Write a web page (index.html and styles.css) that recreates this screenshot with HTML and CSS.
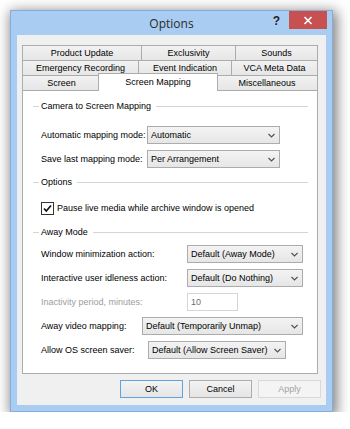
FILE: index.html
```html
<!DOCTYPE html>
<html>
<head>
<meta charset="utf-8">
<title>Options</title>
<link rel="stylesheet" href="styles.css">
</head>
<body>
<div class="window">
  <div class="titlebar">
    <div class="spacer"></div>
    <div class="title">Options</div>
    <div class="ctrls">
      <span class="help">?</span>
      <span class="close"><svg width="10" height="9" viewBox="0 0 10 9"><path d="M1.5 1L8.5 8M8.5 1L1.5 8" stroke="#fff" stroke-width="1.7" fill="none"/></svg></span>
    </div>
  </div>
  <div class="client">
    <div class="tabs">
      <div class="tabrow">
        <div class="tab t120">Product Update</div>
        <div class="tab t95">Exclusivity</div>
        <div class="tab t83">Sounds</div>
      </div>
      <div class="tabrow">
        <div class="tab t117">Emergency Recording</div>
        <div class="tab t94">Event Indication</div>
        <div class="tab t87">VCA Meta Data</div>
      </div>
      <div class="tabrow">
        <div class="tab t79">Screen</div>
        <div class="tab sel">Screen Mapping</div>
        <div class="tab t102 after-sel">Miscellaneous</div>
      </div>
    </div>
    <div class="panel">
      <div class="group first">Camera to Screen Mapping</div>
      <div class="row cam first-row">
        <span class="label">Automatic mapping mode:</span>
        <div class="combo w133"><span>Automatic</span><svg class="chev" width="7" height="5" viewBox="0 0 7 5"><path d="M0.5 1L3.5 4L6.5 1" stroke="#555" stroke-width="1.2" fill="none"/></svg></div>
      </div>
      <div class="row cam">
        <span class="label">Save last mapping mode:</span>
        <div class="combo w133"><span>Per Arrangement</span><svg class="chev" width="7" height="5" viewBox="0 0 7 5"><path d="M0.5 1L3.5 4L6.5 1" stroke="#555" stroke-width="1.2" fill="none"/></svg></div>
      </div>
      <div class="group">Options</div>
      <div class="check-row">
        <svg class="checkbox" width="13" height="13" viewBox="0 0 13 13"><rect x="0.5" y="0.5" width="12" height="12" fill="#fff" stroke="#333"/><path d="M3 6.5L5.3 9L10 3.5" stroke="#111" stroke-width="1.7" fill="none"/></svg>
        <span>Pause live media while archive window is opened</span>
      </div>
      <div class="group away">Away Mode</div>
      <div class="row wide">
        <span class="label">Window minimization action:</span>
        <div class="combo w116"><span>Default (Away Mode)</span><svg class="chev" width="7" height="5" viewBox="0 0 7 5"><path d="M0.5 1L3.5 4L6.5 1" stroke="#555" stroke-width="1.2" fill="none"/></svg></div>
      </div>
      <div class="row wide">
        <span class="label">Interactive user idleness action:</span>
        <div class="combo w116"><span>Default (Do Nothing)</span><svg class="chev" width="7" height="5" viewBox="0 0 7 5"><path d="M0.5 1L3.5 4L6.5 1" stroke="#555" stroke-width="1.2" fill="none"/></svg></div>
      </div>
      <div class="row wide">
        <span class="label disabled">Inactivity period, minutes:</span>
        <div class="textbox">10</div>
      </div>
      <div class="row video">
        <span class="label">Away video mapping:</span>
        <div class="combo w161"><span>Default (Temporarily Unmap)</span><svg class="chev" width="7" height="5" viewBox="0 0 7 5"><path d="M0.5 1L3.5 4L6.5 1" stroke="#555" stroke-width="1.2" fill="none"/></svg></div>
      </div>
      <div class="row os">
        <span class="label">Allow OS screen saver:</span>
        <div class="combo w138"><span>Default (Allow Screen Saver)</span><svg class="chev" width="7" height="5" viewBox="0 0 7 5"><path d="M0.5 1L3.5 4L6.5 1" stroke="#555" stroke-width="1.2" fill="none"/></svg></div>
      </div>
    </div>
    <div class="buttons">
      <div class="btn default">OK</div>
      <div class="btn">Cancel</div>
      <div class="btn disabled">Apply</div>
    </div>
  </div>
</div>
</body>
</html>
```

FILE: styles.css
```css
* { box-sizing: border-box; }
html, body { margin: 0; background: #ffffff; }
body {
  padding: 10px 0 0 10px;
  font-family: "Liberation Sans", Arial, sans-serif;
  font-size: 9px;
  color: #000;
}

.window {
  width: 323px;
  height: 402px;
  background: #a9cdf2;
  border: 1px solid #88acd6;
  box-shadow: 2px 3px 12px 2px rgba(0, 0, 0, 0.5);
  display: flex;
  flex-direction: column;
  padding: 0 6px 6px;
}

.titlebar {
  height: 24px;
  display: grid;
  grid-template-columns: 1fr auto 1fr;
  align-items: start;
}
.title {
  font-family: "Open Sans", "Noto Sans", sans-serif;
  font-size: 12px;
  line-height: 24px;
  color: #2a2a2a;
  padding-top: 1px;
}
.ctrls {
  justify-self: end;
  display: flex;
  align-items: flex-start;
  margin-right: -1px;
}
.help {
  font-family: "Liberation Sans", Arial, sans-serif;
  font-weight: bold;
  font-size: 12px;
  line-height: 18px;
  color: #222;
  margin-right: 9px;
  margin-top: 1px;
}
.close {
  width: 38px;
  height: 18px;
  background: #c75050;
  display: flex;
  align-items: center;
  justify-content: center;
}

.client {
  height: 370px;
  background: #f0f0f0;
  padding: 10px 5px 0 5px;
  display: flex;
  flex-direction: column;
}

.tabs { width: 296px; }
.tabrow {
  display: flex;
  align-items: flex-start;
  height: 16px;
  margin-top: -1px;
}
.tabrow:first-child { margin-top: 0; }
.tab {
  height: 16px;
  border: 1px solid #acacac;
  background: linear-gradient(#f2f2f2, #e6e6e6);
  margin-left: -1px;
  display: flex;
  align-items: center;
  justify-content: center;
  white-space: nowrap;
  color: #000;
}
.tab:first-child { margin-left: 0; }
.t120 { width: 120px; }
.t95 { width: 95px; }
.t83 { width: 83px; }
.t117 { width: 117px; }
.t94 { width: 94px; }
.t87 { width: 87px; }
.t79 { width: 79px; }
.t102 { width: 102px; }
.tab.sel {
  width: 120px;
  height: 18px;
  margin-top: -2px;
  margin-left: -3px;
  background: #fff;
  border-bottom: none;
  position: relative;
  z-index: 2;
  padding-bottom: 2px;
}
.tab.after-sel { margin-left: -2px; }

.panel {
  width: 296px;
  height: 284px;
  margin-top: -1px;
  background: #fff;
  border: 1px solid #acacac;
  position: relative;
  z-index: 1;
  padding: 0 9px 0 18px;
  display: flex;
  flex-direction: column;
}

.group {
  display: flex;
  align-items: center;
  height: 14px;
  margin-left: -8px;
  margin-top: 7px;
  white-space: nowrap;
}
.group::before {
  content: "";
  width: 6px;
  height: 1px;
  background: #d5d5d5;
  margin-right: 2px;
}
.group::after {
  content: "";
  flex: 1;
  height: 1px;
  background: #d5d5d5;
  margin-left: 5px;
}
.group.first { margin-top: 8px; }
.group.away { margin-top: 10px; }

.row {
  display: flex;
  align-items: center;
  height: 18px;
  margin-top: 6px;
}
.row.first-row { margin-top: 13px; }
.label { white-space: nowrap; flex: none; }
.row.cam .label { width: 106px; }
.row.wide .label { width: 146px; }
.row.video .label { width: 101px; }
.row.os .label { width: 107px; }
.label.disabled { color: #9d9d9d; }

.combo {
  height: 18px;
  border: 1px solid #acacac;
  background: linear-gradient(#f3f3f3, #e6e6e6);
  display: flex;
  align-items: center;
  justify-content: space-between;
  padding: 0 4px 0 3px;
  white-space: nowrap;
}
.chev { flex: none; }
.w133 { width: 133px; }
.w116 { width: 116px; }
.w161 { width: 161px; }
.w138 { width: 138px; }

.textbox {
  width: 51px;
  height: 18px;
  border: 1px solid #d6d6d6;
  background: #fff;
  color: #6d6d6d;
  display: flex;
  align-items: center;
  padding-left: 3px;
}

.check-row {
  display: flex;
  align-items: center;
  height: 14px;
  margin-top: 12px;
}
.checkbox { margin-right: 3px; flex: none; }

.buttons {
  display: flex;
  justify-content: flex-end;
  gap: 6px;
  margin-top: 6px;
}
.btn {
  width: 63px;
  height: 18px;
  border: 1px solid #acacac;
  background: linear-gradient(#f3f3f3, #e5e5e5);
  display: flex;
  align-items: center;
  justify-content: center;
  color: #000;
}
.btn.default { border-color: #5fa3e0; }
.btn.disabled {
  border-color: #d9d9d9;
  background: #f4f4f4;
  color: #a3a3a3;
}
```
